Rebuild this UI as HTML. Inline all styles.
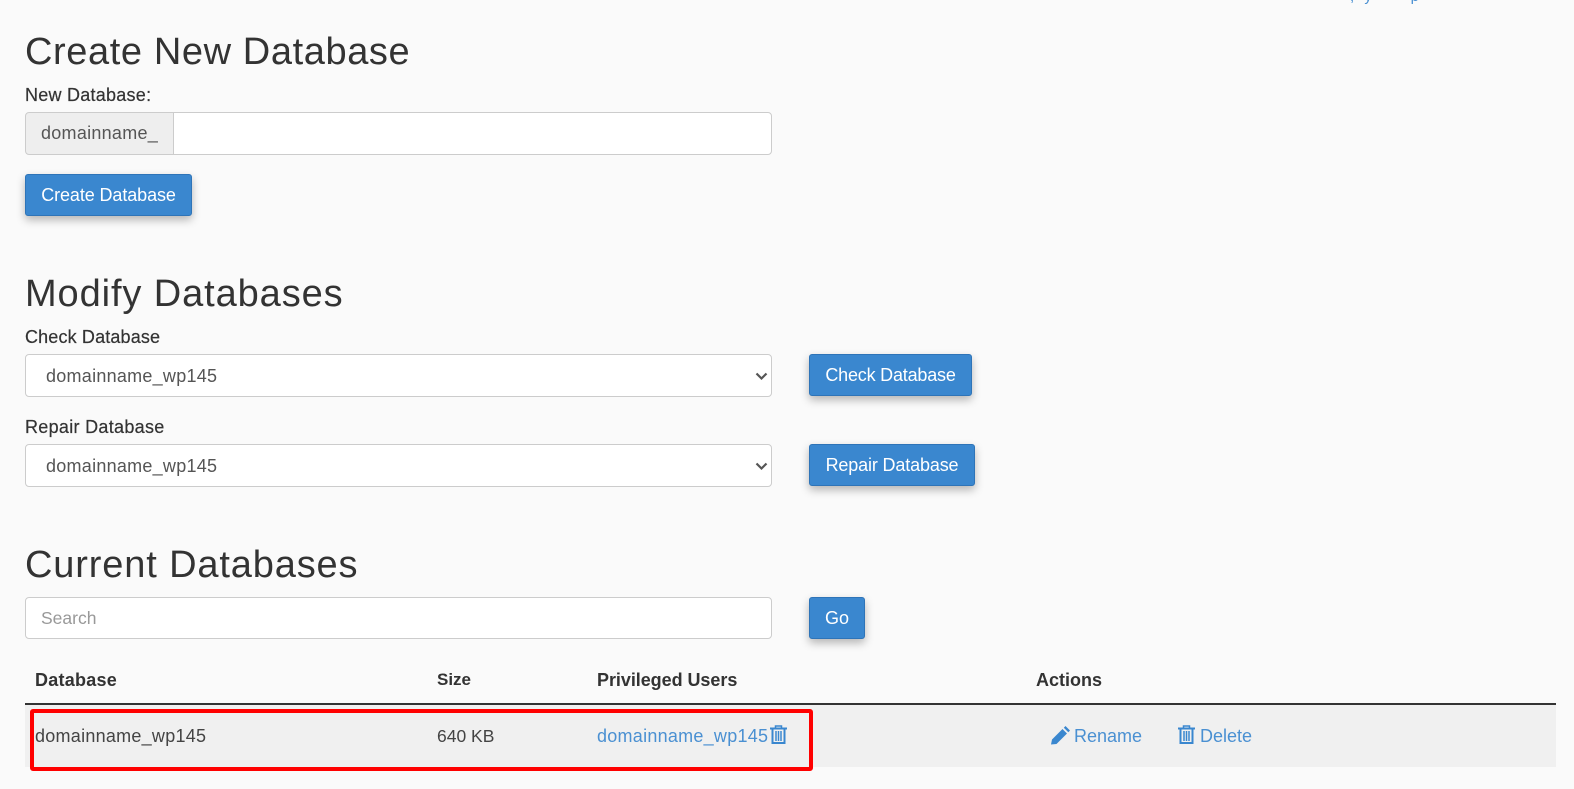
<!DOCTYPE html>
<html lang="en">
<head>
<meta charset="utf-8">
<title>Databases</title>
<style>
html,body{margin:0;padding:0;width:1574px;height:789px;overflow:hidden;background:#fafafa;color:#333;font-family:"Liberation Sans",sans-serif}
.a{position:absolute;white-space:nowrap}
h2{position:absolute;margin:0;left:25px;font-weight:400;font-size:38px;line-height:44px;color:#333;white-space:nowrap}
label{position:absolute;left:25px;font-size:18px;line-height:22px;color:#333;font-weight:400;-webkit-text-stroke:.2px #333;white-space:nowrap}
.box{position:absolute;left:25px;background:#fff;border:1px solid #ccc;border-radius:4px;box-sizing:content-box}
.addon{position:absolute;left:25px;top:112px;width:147px;height:41px;background:#eee;border:1px solid #ccc;border-radius:4px 0 0 4px;font-size:18px;line-height:41px;color:#555;text-indent:15px;letter-spacing:.27px}
select,input{font-family:"Liberation Sans",sans-serif;font-size:18px;color:#555;outline:0}
select{appearance:none;-webkit-appearance:none;padding:0 0 0 20px;letter-spacing:.26px}
input{padding:0 15px}
input::placeholder{color:#999;opacity:1;font-size:17.500px}
button{position:absolute;height:42px;margin:0;padding:0;background:#3a87cf;border:1px solid #2e74b8;border-radius:3px;box-shadow:0 4px 9px rgba(0,0,0,.28);color:#fff;font-family:"Liberation Sans",sans-serif;font-size:18px;text-align:center;box-sizing:border-box}
.th{position:absolute;top:669px;font-size:18px;line-height:22px;font-weight:700;color:#333;white-space:nowrap}
.td{position:absolute;top:725px;font-size:18px;line-height:22px;color:#444;white-space:nowrap}
.lnk{color:#4a90d2}
</style>
</head>
<body>
<span class="a lnk" style="left:1350px;top:-11px;font-size:15px;line-height:16px;letter-spacing:3px">, y &nbsp; &nbsp; p</span>

<h2 style="top:30px;letter-spacing:.6px">Create New Database</h2>
<label style="top:84px;letter-spacing:.25px">New Database:</label>
<input class="box" style="left:172px;top:112px;width:568px;height:41px;border-radius:0 4px 4px 0" type="text" aria-label="New Database">
<div class="addon">domainname_</div>
<button style="left:25px;top:174px;width:167px;letter-spacing:-.1px">Create Database</button>

<h2 style="top:272px;letter-spacing:.9px">Modify Databases</h2>
<label style="top:326px;letter-spacing:.15px">Check Database</label>
<select class="box" style="top:354px;width:725px;height:41px"><option>domainname_wp145</option></select>
<svg class="a" style="left:755px;top:372px" width="13" height="9" viewBox="0 0 13 9"><path d="M1.500 1.500 6.500 6.500 11.500 1.500" fill="none" stroke="#555" stroke-width="2.200"/></svg>
<button style="left:809px;top:354px;width:163px;letter-spacing:-.2px;padding-top:1px">Check Database</button>

<label style="top:416px;letter-spacing:.3px">Repair Database</label>
<select class="box" style="top:444px;width:725px;height:41px"><option>domainname_wp145</option></select>
<svg class="a" style="left:755px;top:462px" width="13" height="9" viewBox="0 0 13 9"><path d="M1.500 1.500 6.500 6.500 11.500 1.500" fill="none" stroke="#555" stroke-width="2.200"/></svg>
<button style="left:809px;top:444px;width:166px;letter-spacing:-.15px;padding-top:1px">Repair Database</button>

<h2 style="top:543px;letter-spacing:.85px">Current Databases</h2>
<input class="box" style="top:597px;width:715px;height:40px" type="text" placeholder="Search">
<button style="left:809px;top:597px;width:56px">Go</button>

<div class="th" style="left:35px;letter-spacing:.25px">Database</div>
<div class="th" style="left:437px;font-size:17px">Size</div>
<div class="th" style="left:597px;letter-spacing:-.05px">Privileged Users</div>
<div class="th" style="left:1036px">Actions</div>

<div class="a" style="left:25px;top:703px;width:1531px;height:2px;background:#333"></div>
<div class="a" style="left:25px;top:705px;width:1531px;height:62px;background:#f0f0f0"></div>

<div class="td" style="left:35px;letter-spacing:.26px">domainname_wp145</div>
<div class="td" style="left:437px;font-size:17.500px">640 KB</div>
<div class="td lnk" style="left:597px;letter-spacing:.26px">domainname_wp145</div>
<svg class="a" style="left:770px;top:725px" width="17" height="19" viewBox="0 0 17 19"><g fill="none" stroke="#3a87cf"><path d="M0 3.500H17" stroke-width="2"/><path d="M5.500 3V1H11.500V3" stroke-width="1.500"/><path d="M2.500 4V18H14.500V4" stroke-width="2"/><path d="M6 6V16M8.500 6V16M11 6V16" stroke-width="1.500"/></g></svg>

<svg class="a" style="left:1051px;top:726px" width="19" height="19" viewBox="0 0 19 19"><path d="M0 18.500 1 13.500 11.500 3 16 7.500 5.500 18ZM12.800 1.700 14.500 0 19 4.500 17.300 6.200Z" fill="#3a87cf"/></svg>
<div class="td lnk" style="left:1074px">Rename</div>
<svg class="a" style="left:1178px;top:725px" width="17" height="19" viewBox="0 0 17 19"><g fill="none" stroke="#3a87cf"><path d="M0 3.500H17" stroke-width="2"/><path d="M5.500 3V1H11.500V3" stroke-width="1.500"/><path d="M2.500 4V18H14.500V4" stroke-width="2"/><path d="M6 6V16M8.500 6V16M11 6V16" stroke-width="1.500"/></g></svg>
<div class="td lnk" style="left:1200px">Delete</div>

<div class="a" style="left:30px;top:709px;width:775px;height:54px;border:4px solid #f00;border-radius:3px;box-sizing:content-box"></div>
</body>
</html>
